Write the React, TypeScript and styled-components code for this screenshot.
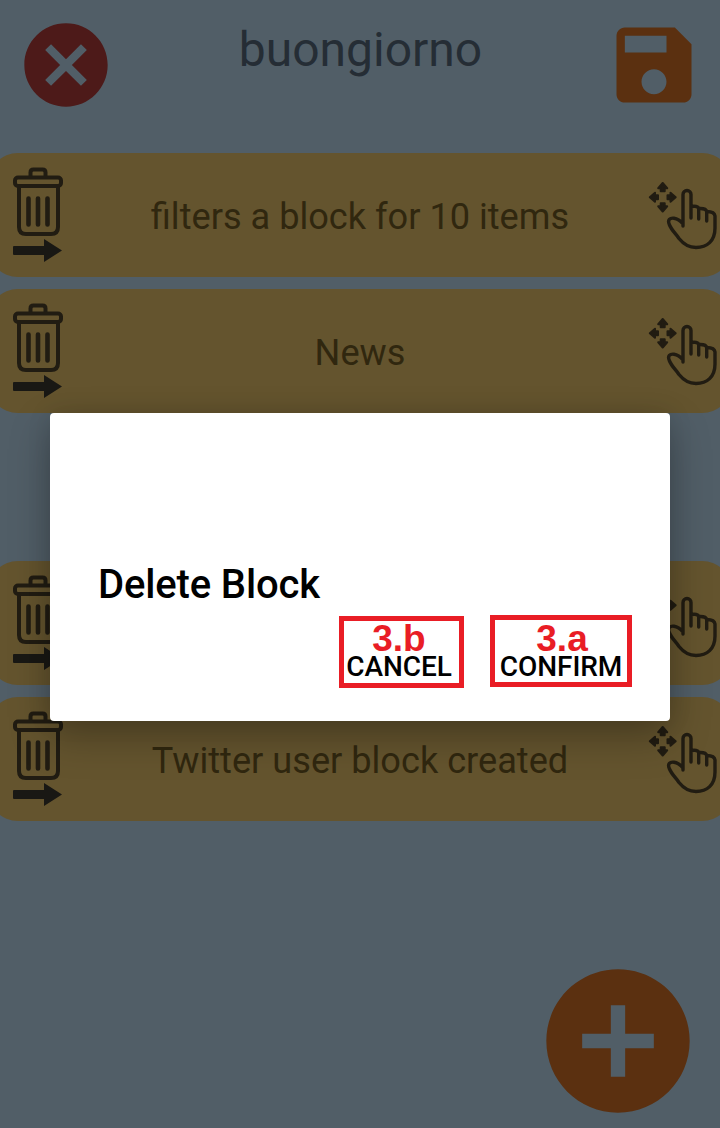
import React from "react";
import styled, { createGlobalStyle } from "styled-components";

const GlobalStyle = createGlobalStyle`
  * { box-sizing: border-box; }
  body { margin: 0; background: #515e67; }
`;

const Screen = styled.main`
  position: relative;
  width: 720px;
  height: 1128px;
  overflow: hidden;
  display: flex;
  flex-direction: column;
  background: #515e67;
  font-family: Roboto, "Liberation Sans", sans-serif;
`;

const Header = styled.header`
  display: flex;
  justify-content: space-between;
  align-items: flex-start;
  height: 153px;
  padding: 15px 16px 0;
`;

const IconButton = styled.button`
  display: block;
  padding: 0;
  border: 0;
  background: none;
  line-height: 0;
`;

const Title = styled.h1`
  margin: 7px 0 0 1px;
  font-size: 48px;
  line-height: 56px;
  font-weight: 400;
  color: #252d35;
`;

const BlockList = styled.ul`
  display: flex;
  flex-direction: column;
  gap: 12.5px;
  width: 744px;
  margin: 0 -12px;
  padding: 0;
  list-style: none;
`;

const Block = styled.li<{ $empty?: boolean }>`
  display: flex;
  align-items: flex-start;
  justify-content: space-between;
  height: 123.5px;
  padding: 0 12px;
  border-radius: 30px;
  background: ${(p) => (p.$empty ? "transparent" : "#64542e")};
`;

const BlockLabel = styled.span`
  flex: 1;
  padding-top: 43px;
  text-align: center;
  font-size: 36.15px;
  line-height: 42px;
  color: #30270f;
`;

const AddButton = styled(IconButton)`
  align-self: flex-end;
  margin: auto 16px 1px 0;
`;

const Overlay = styled.div`
  position: absolute;
  inset: 0;
  display: flex;
  align-items: center;
  justify-content: center;
  padding-top: 6px;
`;

const Dialog = styled.section`
  display: flex;
  flex-direction: column;
  justify-content: flex-end;
  width: 620px;
  height: 308px;
  padding: 0 38px 33px 48px;
  border-radius: 4px;
  background: #fff;
  box-shadow: 0 16px 40px rgba(0, 0, 0, 0.27), 0 0 24px rgba(0, 0, 0, 0.1);
`;

const DialogTitle = styled.h2`
  margin: 0 0 6px;
  font-size: 40px;
  line-height: 48px;
  letter-spacing: -0.15px;
  font-weight: 500;
  color: #000;
`;

const Actions = styled.div`
  display: flex;
  justify-content: flex-end;
  align-items: flex-start;
  gap: 26px;
`;

const Action = styled.button<{ $width: number; $drop?: number }>`
  display: flex;
  flex-direction: column;
  align-items: center;
  width: ${(p) => p.$width}px;
  height: 72px;
  margin-top: ${(p) => p.$drop ?? 0}px;
  padding: 0;
  border: 5px solid #e91d25;
  background: none;
  white-space: nowrap;
`;

const Step = styled.span<{ $shift?: number; $drop?: number }>`
  height: 36px;
  margin-top: ${(p) => p.$drop ?? 0}px;
  margin-left: ${(p) => p.$shift ?? 0}px;
  color: #e91d25;
  font: 700 37px/36px "Liberation Sans", Arial, sans-serif;
`;

const ActionLabel = styled.span<{ $shift?: number; $raise: number }>`
  margin-top: ${(p) => -p.$raise}px;
  margin-left: ${(p) => p.$shift ?? 0}px;
  color: #000;
  font: 500 28px/24px Roboto, sans-serif;
  letter-spacing: -0.05px;
`;

const BlockIcon = styled.svg`
  display: block;
  width: 76px;
  height: 123px;
  filter: blur(0.5px);
`;

const CloseIcon = () => (
  <svg width="100" height="100" viewBox="0 0 24 24" fill="#4d1a19">
    <path d="M12 2C6.47 2 2 6.47 2 12s4.47 10 10 10 10-4.47 10-10S17.53 2 12 2zm5 13.59L15.59 17 12 13.41 8.41 17 7 15.59 10.59 12 7 8.41 8.41 7 12 10.59 15.59 7 17 8.41 13.41 12 17 15.59z" />
  </svg>
);

const SaveIcon = () => (
  <svg width="100" height="100" viewBox="0 0 24 24" fill="#5b3010">
    <path d="M17 3H5c-1.11 0-2 .9-2 2v14c0 1.1.89 2 2 2h14c1.1 0 2-.9 2-2V7l-4-4zm-5 16c-1.66 0-3-1.34-3-3s1.34-3 3-3 3 1.34 3 3-1.34 3-3 3zm3-10H5V5h10v4z" />
  </svg>
);

const AddIcon = () => (
  <svg width="172" height="172" viewBox="0 0 24 24" fill="#5b3010">
    <path d="M12 2C6.48 2 2 6.48 2 12s4.48 10 10 10 10-4.48 10-10S17.52 2 12 2zm5 11h-4v4h-2v-4H7v-2h4V7h2v4h4v2z" />
  </svg>
);

const TrashIcon = () => (
  <BlockIcon viewBox="0 0 76 123" fill="none" stroke="#211c12" strokeWidth="4">
    <path d="M30.500 24v-4.500q0-3 3-3h9q3 0 3 3V24" />
    <rect x="15" y="24.500" width="46" height="8.500" rx="3" />
    <path d="M19 33v41q0 7 7 7h25q7 0 7-7V33" />
    <path d="M28.500 45.500v26M38 45.500v26M47.500 45.500v26" strokeWidth="4.600" strokeLinecap="round" />
    <path d="M14 93h30v-7L62 97.500 44 109v-7H14q-1 0-1-1v-7q0-1 1-1z" fill="#191814" stroke="none" />
  </BlockIcon>
);

const DragIcon = () => (
  <BlockIcon viewBox="644 153 76 123" fill="none" stroke="#211c12" strokeWidth="3.400" strokeLinecap="round" strokeLinejoin="round">
    <g fill="#211c12" strokeWidth="2">
      <path d="M662.700 183l4.500 5.200h-2.500v3h-4v-3h-2.500z" />
      <path d="M662.700 211.500l4.500-5.200h-2.500v-3h-4v3h-2.500z" />
      <path d="M649.800 197.200l5.200-4.500v2.500h3v4h-3v2.500z" />
      <path d="M675.700 197.200l-5.200-4.500v2.500h-3v4h3v2.500z" />
    </g>
    <path d="M683 226V194.500a4 4 0 0 1 8 0V218M691 206.500Q698 205.500 698.700 208.500V219M698.700 208.500Q706 208 706.700 211.500V221M706.700 211.500Q714.500 211.500 715 216V228C715 241 707 247.500 696 247.500C688 247.500 683 243.500 679 238.500C676 234 671.500 230 669.500 225C667 219.500 670 217.800 674 218.200C678 218.700 681 221.500 683 224" />
  </BlockIcon>
);

const blocks = [
  "filters a block for 10 items",
  "News",
  null,
  "",
  "Twitter user block created",
];

export default function App() {
  return (
    <Screen>
      <GlobalStyle />
      <Header>
        <IconButton aria-label="Close"><CloseIcon /></IconButton>
        <Title>buongiorno</Title>
        <IconButton aria-label="Save"><SaveIcon /></IconButton>
      </Header>
      <BlockList>
        {blocks.map((label, i) => (
          <Block key={i} $empty={label === null}>
            {label !== null && (
              <>
                <TrashIcon />
                <BlockLabel>{label}</BlockLabel>
                <DragIcon />
              </>
            )}
          </Block>
        ))}
      </BlockList>
      <AddButton aria-label="Add block"><AddIcon /></AddButton>
      <Overlay>
        <Dialog role="dialog">
          <DialogTitle>Delete Block</DialogTitle>
          <Actions>
            <Action $width={125} $drop={1}>
              <Step $shift={-5}>3.b</Step>
              <ActionLabel $shift={-5} $raise={2}>CANCEL</ActionLabel>
            </Action>
            <Action $width={142}>
              <Step $shift={2} $drop={1}>3.a</Step>
              <ActionLabel $raise={2}>CONFIRM</ActionLabel>
            </Action>
          </Actions>
        </Dialog>
      </Overlay>
    </Screen>
  );
}
